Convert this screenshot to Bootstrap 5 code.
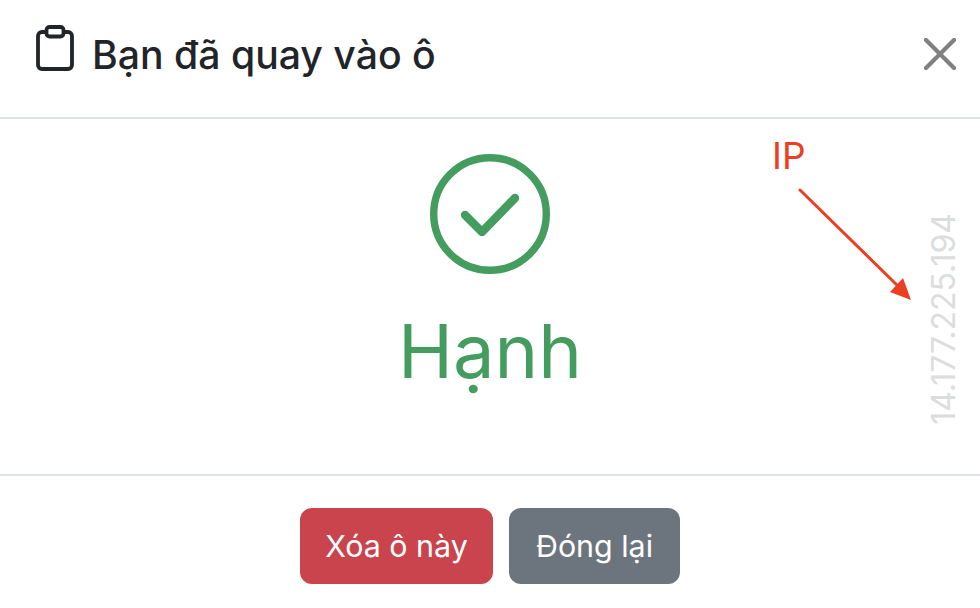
<!DOCTYPE html>
<html lang="vi">
<head>
<meta charset="utf-8">
<title>Bạn đã quay vào ô</title>
<link href="https://cdn.jsdelivr.net/npm/bootstrap@5.3.0/dist/css/bootstrap.min.css" rel="stylesheet">
<style>
html,body{height:608px;overflow:hidden;background:#fff;font-family:Inter,"Liberation Sans",sans-serif}
.shot{width:980px;height:608px;display:flex;flex-direction:column}
.shot-head{height:117px;padding:0 24px 0 36px;color:#212529;position:relative}
.shot-title{font-size:39.200px;font-weight:500;letter-spacing:0;margin:0;line-height:1.2;padding-bottom:7px}
.shot-clip{width:38px;height:46px;margin-bottom:22px;margin-right:2px;flex:none}
.shot-x{width:32px;height:32px;margin-bottom:9px;background:none;border:0;padding:0}
.shot-rule{height:2px;background:#dee2e6;flex:none}
.shot-body{height:355px;position:relative;padding-top:35px}
.shot-check{width:120px;height:120px}
.shot-name{color:#449d5f;font-size:74px;line-height:1;margin-top:40px;font-weight:400}
.shot-ip{position:absolute;right:20px;top:94px;writing-mode:vertical-rl;transform:rotate(180deg);font-size:32px;line-height:1;color:#dcdddd;white-space:nowrap}
.shot-label{position:absolute;left:772px;top:18px;font-size:37px;line-height:1;color:#ee3e22}
.shot-arrow{position:absolute;left:795px;top:68px;width:125px;height:120px}
.shot-foot{flex:1;padding-top:32px;gap:16px}
.shot-btn{height:76px;border-radius:12px;font-size:30.400px;line-height:1;padding:0;border:0;color:#fff}
.shot-red{background:#ca444d;width:193px}
.shot-grey{background:#6c757d;width:171px}
</style>
</head>
<body>
<div class="shot">
  <header class="shot-head d-flex align-items-center justify-content-between">
    <div class="d-flex align-items-center gap-3">
      <svg class="shot-clip" viewBox="0 0 38 46" fill="none" stroke="#212529" stroke-width="3.800" stroke-linejoin="round"><path d="M10 7H6A4 4 0 0 0 2 11V40A4 4 0 0 0 6 44H32A4 4 0 0 0 36 40V11A4 4 0 0 0 32 7H28"/><rect x="10.500" y="2" width="17" height="9.500" rx="3"/></svg>
      <h5 class="shot-title">Bạn đã quay vào ô</h5>
    </div>
    <button class="shot-x" type="button" aria-label="Close"><svg viewBox="0 0 32 32" width="32" height="32" stroke="#808080" stroke-width="4.200" stroke-linecap="round"><path d="M2 2L30 30M30 2L2 30"/></svg></button>
  </header>
  <div class="shot-rule"></div>
  <main class="shot-body d-flex flex-column align-items-center">
    <svg class="shot-check" viewBox="0 0 120 120" fill="none" stroke="#449d5f"><circle cx="60" cy="60" r="56.300" stroke-width="7.400"/><path d="M35 61L52 78L85 44" stroke-width="8.400" stroke-linecap="round" stroke-linejoin="round"/></svg>
    <div class="shot-name">Hạnh</div>
    <div class="shot-label">IP</div>
    <svg class="shot-arrow" viewBox="0 0 125 120"><path d="M5 3L105 101" stroke="#ee3e22" stroke-width="3" stroke-linecap="round"/><path d="M116 113L95 105L108 91Z" fill="#ee3e22"/></svg>
    <div class="shot-ip">14.177.225.194</div>
  </main>
  <div class="shot-rule"></div>
  <footer class="shot-foot d-flex justify-content-center align-items-start">
    <button class="shot-btn shot-red" type="button">Xóa ô này</button>
    <button class="shot-btn shot-grey" type="button">Đóng lại</button>
  </footer>
</div>
<script src="https://cdn.jsdelivr.net/npm/bootstrap@5.3.0/dist/js/bootstrap.bundle.min.js"></script>
</body>
</html>
